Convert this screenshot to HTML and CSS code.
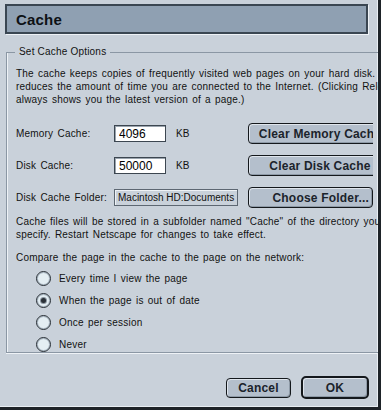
FILE: index.html
```html
<!DOCTYPE html>
<html lang="en">
<head>
  <meta charset="UTF-8">
  <title>Cache</title>
  <link rel="stylesheet" href="styles.css">
</head>
<body>
<div class="window">
  <div class="title-bar">
    <h1>Cache</h1>
  </div>

  <fieldset class="group">
    <legend>Set Cache Options</legend>

    <p class="note">The cache keeps copies of frequently visited web pages on your hard disk. The<br>
      reduces the amount of time you are connected to the Internet. (Clicking Reload<br>
      always shows you the latest version of a page.)</p>

    <div class="row first">
      <label class="field-label">Memory Cache:</label>
      <input class="num" type="text" value="4096">
      <span class="unit">KB</span>
      <div class="btn-clip"><button class="btn wide">Clear Memory Cache</button></div>
    </div>

    <div class="row">
      <label class="field-label">Disk Cache:</label>
      <input class="num" type="text" value="50000">
      <span class="unit">KB</span>
      <div class="btn-clip"><button class="btn wide">Clear Disk Cache</button></div>
    </div>

    <div class="row">
      <label class="field-label">Disk Cache Folder:</label>
      <div class="path">Macintosh HD:Documents</div>
      <div class="btn-clip"><button class="btn folder">Choose Folder...</button></div>
    </div>

    <p class="note second">Cache files will be stored in a subfolder named "Cache" of the directory you<br>
      specify. Restart Netscape for changes to take effect.</p>

    <p class="compare">Compare the page in the cache to the page on the network:</p>

    <ul class="radios">
      <li><span class="radio"></span>Every time I view the page</li>
      <li><span class="radio on"></span>When the page is out of date</li>
      <li><span class="radio"></span>Once per session</li>
      <li><span class="radio"></span>Never</li>
    </ul>
  </fieldset>

  <div class="actions">
    <button class="btn cancel">Cancel</button>
    <button class="btn ok">OK</button>
  </div>
</div>
</body>
</html>
```

FILE: styles.css
```css
:root {
  --bg: #c9d1da;
  --title-fill: #8fa0b2;
  --etch: #8b97a4;
  --btn-fill: #b4bfcc;
  --text: #111;
}

* {
  margin: 0;
  padding: 0;
  box-sizing: border-box;
}

body {
  background: var(--bg);
  font-family: 'Liberation Sans', Arial, sans-serif;
  font-size: 10px;
  color: var(--text);
}

.window {
  width: 381px;
  height: 410px;
  background: var(--bg);
  border-right: 3px solid #1e2328;
  border-bottom: 3px solid #1e2328;
  box-shadow: inset -1px -1px 0 #e9eef3;
  overflow: hidden;
}

.title-bar {
  margin: 4px 0 0 5px;
  width: 363px;
  height: 30px;
  background: var(--title-fill);
  border: 2px solid #3a4652;
  box-shadow: 1px 1px 0 #eef2f6;
  display: flex;
  align-items: center;
  padding-left: 9px;
}

h1 {
  font-size: 15px;
  font-weight: bold;
  color: #0d1115;
  letter-spacing: 0.2px;
}

.group {
  margin: 12px 0 0 6px;
  width: 368px;
  height: 307px;
  border: 1px solid var(--etch);
  border-right: none;
  box-shadow: inset 1px 0 0 #eef2f6, 0 1px 0 #eef2f6;
  padding: 0 0 0 9px;
  white-space: nowrap;
}

.group legend {
  padding: 0 4px;
  margin-left: -1px;
  font-size: 10px;
  line-height: 12px;
  letter-spacing: 0.2px;
}

.note,
.compare,
.field-label,
.radios li {
  letter-spacing: 0.2px;
  word-spacing: 1.2px;
}

.note {
  margin-top: 9px;
  line-height: 13px;
}

.note.second {
  margin-top: 7px;
}

.row {
  display: flex;
  align-items: center;
  height: 21px;
  margin-top: 11px;
}

.row.first {
  margin-top: 17px;
}

.field-label {
  width: 98px;
}

.num {
  width: 52px;
  height: 17px;
  border: 1px solid #3c4650;
  box-shadow: inset 1px 1px 0 #9aa4ae;
  background: #fff;
  font-family: 'Liberation Sans', Arial, sans-serif;
  font-size: 12px;
  padding: 1px 0 0 4px;
  color: #000;
}

.unit {
  width: 82px;
  padding-left: 10px;
}

.path {
  width: 124px;
  height: 17px;
  border: 1px solid #5d6772;
  box-shadow: inset 1px 1px 0 #eef2f6;
  padding: 2px 0 0 3px;
  overflow: hidden;
  margin-right: 10px;
  font-size: 10px;
}

.btn-clip {
  width: 125px;
  overflow: hidden;
  display: flex;
}

.btn {
  height: 21px;
  background: var(--btn-fill);
  border: 1px solid #14181c;
  border-radius: 4px;
  box-shadow: inset 1px 1px 0 #dfe5ec, inset -1px -1px 0 #8e9aa7;
  font-family: 'Liberation Sans', Arial, sans-serif;
  font-size: 12px;
  font-weight: bold;
  color: #1b232b;
  letter-spacing: 0.2px;
  width: 125px;
  flex-shrink: 0;
}

.btn.wide {
  width: 144px;
}

.btn.folder {
  text-align: right;
  padding-right: 3px;
}

.compare {
  margin-top: 10px;
  line-height: 13px;
}

.radios {
  list-style: none;
  margin-top: 3px;
  padding-left: 20px;
}

.radios li {
  display: flex;
  align-items: center;
  height: 22px;
  gap: 8px;
}

.radio {
  width: 15px;
  height: 15px;
  border-radius: 50%;
  border: 1px solid #232a31;
  background: #e4eef3;
  box-shadow: inset 0 0 0 1px #a9b6c2;
  display: flex;
  align-items: center;
  justify-content: center;
}

.radio.on::after {
  content: "";
  width: 5px;
  height: 5px;
  border-radius: 50%;
  background: #2a3037;
  box-shadow: 0 0 0 1px #8a95a0;
}

.actions {
  display: flex;
  justify-content: flex-end;
  align-items: center;
  gap: 10px;
  margin-top: 23px;
  padding-right: 9px;
}

.btn.cancel {
  width: 65px;
  height: 20px;
}

.btn.ok {
  width: 68px;
  height: 23px;
  border: 2px solid #14181c;
  border-radius: 5px;
}
```
